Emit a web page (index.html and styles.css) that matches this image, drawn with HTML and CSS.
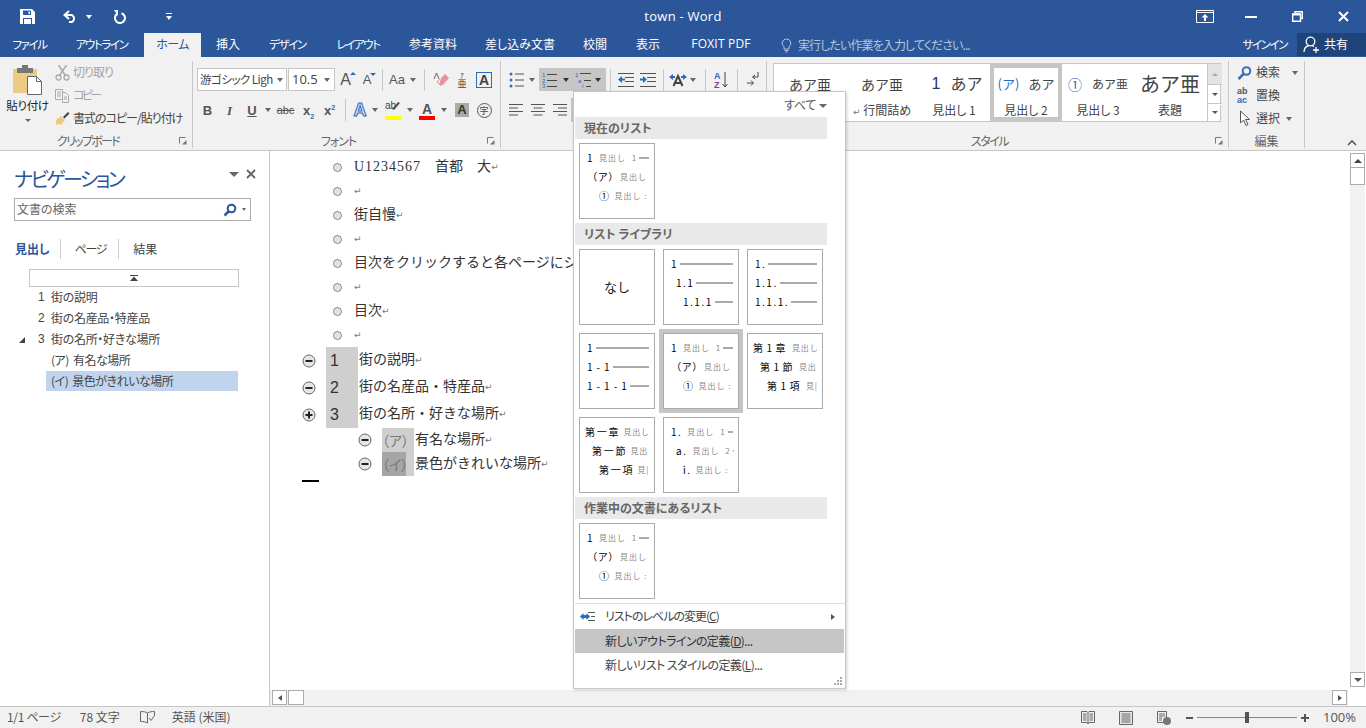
FILE: index.html
```html
<!DOCTYPE html>
<html lang="ja">
<head>
<meta charset="utf-8">
<title>town - Word</title>
<link rel="stylesheet" href="styles.css">
</head>
<body>
<svg class="sprite" width="0" height="0">
  <symbol id="launch" viewBox="0 0 8 8"><path d="M.5.5h6M.5.5v6" fill="none" stroke="#777"/><path d="M7.5 3v4.500h-4.500z" fill="#777"/></symbol>
  <symbol id="minus" viewBox="0 0 14 14"><circle cx="7" cy="7" r="6" fill="#e6e6e6" stroke="#666"/><path d="M3.500 7h7" stroke="#222" stroke-width="2"/></symbol>
  <symbol id="plus" viewBox="0 0 14 14"><circle cx="7" cy="7" r="6" fill="#e6e6e6" stroke="#666"/><path d="M3.500 7h7M7 3.500v7" stroke="#222" stroke-width="2"/></symbol>
</svg>

<header class="titlebar">
  <div class="qat">
    <svg class="q-save" width="15" height="15" viewBox="0 0 15 15"><path d="M0 0h12l3 3v12H0z" fill="#fff"/><path d="M3 1.500h8v4.500H3zM3 9h9v6H3z" fill="#2b579a"/><path d="M4 10h7v5H4z" fill="#fff"/><path d="M8.500 2.500h1.500v2.500H8.500z" fill="#fff"/></svg>
    <svg class="q-undo" width="15" height="13" viewBox="0 0 15 13"><path d="M6 1 1.500 5 6 9" fill="none" stroke="#fff" stroke-width="2"/><path d="M2 5h7a4 4 0 0 1 0 7H6" fill="none" stroke="#fff" stroke-width="2"/></svg>
    <i class="caret white q-caret"></i>
    <svg class="q-redo" width="14" height="14" viewBox="0 0 14 14"><path d="M8.500 3.200A5 5 0 1 1 4 3.900" fill="none" stroke="#fff" stroke-width="2"/><path d="M5 0v6L1 0z" fill="#fff"/></svg>
    <svg class="q-more" width="8" height="8" viewBox="0 0 8 8"><path d="M1 .5h6" stroke="#fff"/><path d="M1 3h6L4 7z" fill="#fff"/></svg>
  </div>
  <div class="doc-title">town - Word</div>
  <div class="winctl">
    <span><svg width="18" height="13" viewBox="0 0 18 13"><path d="M.5.500h17v12H.5zM.5 2.500h17" fill="none" stroke="#fff"/><path d="M9 4 5.500 7.500h2.500V11h2V7.500h2.500z" fill="#fff"/></svg></span>
    <span><svg width="12" height="2" viewBox="0 0 12 2"><path d="M0 1h12" stroke="#fff" stroke-width="2"/></svg></span>
    <span><svg width="11" height="11" viewBox="0 0 11 11"><path d="M3 2V.700h7.300V7.500H8.500" fill="none" stroke="#fff" stroke-width="1.400"/><path d="M.7 3h7.800v7.300H.7z" fill="none" stroke="#fff" stroke-width="1.400"/><path d="M.7 3.500h7.800" stroke="#fff" stroke-width="2"/></svg></span>
    <span><svg width="11" height="11" viewBox="0 0 11 11"><path d="M1 1l9 9M10 1l-9 9" stroke="#fff" stroke-width="2"/></svg></span>
  </div>
</header>

<nav class="tabbar">
  <div class="tabs">
    <span class="kana">ファイル</span><span class="kana">アウトライン</span><span class="active">ホーム</span><span>挿入</span><span class="kana">デザイン</span><span class="kana">レイアウト</span><span>参考資料</span><span>差し込み文書</span><span>校閲</span><span>表示</span><span class="latin">FOXIT PDF</span>
  </div>
  <div class="tellme">
    <svg width="11" height="15" viewBox="0 0 11 15"><path d="M5.500 1a4.300 4.300 0 0 0-2.500 7.800V11h5V8.800A4.300 4.300 0 0 0 5.500 1zM3.500 12.500h4M4.500 14h2" fill="none" stroke="#b4c5de"/></svg>
    <span>実行したい作業を入力してください...</span>
  </div>
  <span class="signin kana">サインイン</span>
  <div class="share">
    <svg width="17" height="17" viewBox="0 0 17 17"><circle cx="7.500" cy="5.500" r="4.300" fill="none" stroke="#fff" stroke-width="1.300"/><path d="M1 16c0-4 3-6 5-6.500M9 9.500c.8.200 1.500.6 2 1" fill="none" stroke="#fff" stroke-width="1.300"/><path d="M10 14h6M13 11v6" stroke="#fff" stroke-width="1.300"/></svg>
    <span>共有</span>
  </div>
</nav>

<section class="ribbon">
  <div class="group g-clip">
    <div class="body clip-body">
      <div class="paste">
        <svg width="30" height="30" viewBox="0 0 30 30"><path d="M0 4h24v24H0z" fill="#eecb84"/><path d="M4 3h16v5H4z" fill="#777"/><path d="M9 0h6v4H9z" fill="#777"/><path d="M14.500 11.500h9l5 5v13h-14z" fill="#fff" stroke="#666"/><path d="M23.500 11.500v5h5" fill="none" stroke="#666"/></svg>
        <span class="paste-label">貼り付け</span>
        <i class="caret small"></i>
      </div>
      <div class="stack">
        <div class="s-row disabled"><svg width="15" height="16" viewBox="0 0 15 16"><circle cx="3.500" cy="12.500" r="2.500" fill="none" stroke="#aaa" stroke-width="1.300"/><circle cx="11.500" cy="12.500" r="2.500" fill="none" stroke="#aaa" stroke-width="1.300"/><path d="M4.500 10.500 11.500 0M10.500 10.500 3.500 0" stroke="#aaa" stroke-width="1.500"/></svg><span class="t-cut">切り取り</span></div>
        <div class="s-row disabled"><svg width="15" height="14" viewBox="0 0 15 14"><path d="M.5.500h7v10h-7zM2 3h4M2 5h4M2 7h4" fill="none" stroke="#aaa"/><path d="M7.500 3.500h3l3 3v7h-6z" fill="#f1f1f1" stroke="#aaa"/><path d="M9 8h3M9 10h3" stroke="#aaa"/></svg><span class="t-copy">コピー</span></div>
        <div class="s-row"><svg width="15" height="15" viewBox="0 0 15 15"><path d="M1 9l5-4 4 4-4 5-3-1-2 1z" fill="#eecb84"/><path d="M8 6l5-5 1.500 1.500-5 5z" fill="#444"/></svg><span class="t-fmt">書式のコピー/貼り付け</span></div>
      </div>
    </div>
    <div class="glabel"><span></span><span class="t-clip">クリップボード</span><svg class="launcher"><use href="#launch"/></svg></div>
  </div>

  <div class="group g-font">
    <div class="body rows">
      <div class="grid font-r1">
        <div class="combo name"><span>游ゴシック Ligh</span><i class="caret"></i></div>
        <div class="combo size"><span>10.5</span><i class="caret"></i></div>
        <span class="gly big">A<i class="tri up"></i></span>
        <span class="gly mid">A<i class="tri down"></i></span>
        <i class="sep"></i>
        <span class="gly aa">Aa</span><i class="caret"></i>
        <i class="sep"></i>
        <svg width="16" height="15" viewBox="0 0 16 15"><path d="M8 6l4-4 4 4-6 7H6z" fill="#e7929d"/><path d="M8 14 4 10l3-3" fill="none" stroke="#e7929d"/><path d="M1 7 3.500 1 6 7" fill="none" stroke="#666"/></svg>
        <span class="phon"><small>ｱ</small><b>亜</b></span>
        <span class="boxa">A</span>
      </div>
      <div class="grid font-r2">
        <span class="gly bold">B</span>
        <span class="gly ital">I</span>
        <span class="gly under">U</span><i class="caret"></i>
        <span class="gly strike">abc</span>
        <span class="gly xs">x<sub>2</sub></span>
        <span class="gly xs">x<sup>2</sup></span>
        <i class="sep"></i>
        <span class="gly effect">A</span><i class="caret"></i>
        <span class="hl"><svg width="16" height="12" viewBox="0 0 16 12"><path d="M9 9l6-7-2-1-6 7z" fill="#555"/></svg><em>ab</em><b class="bar yellow"></b></span><i class="caret"></i>
        <span class="hl"><span class="gly fc">A</span><b class="bar red"></b></span><i class="caret"></i>
        <span class="shade">A</span>
        <span class="enc">字</span>
      </div>
    </div>
    <div class="glabel"><span></span><span class="t-font">フォント</span><svg class="launcher"><use href="#launch"/></svg></div>
  </div>

  <div class="group g-para">
    <div class="body rows">
      <div class="grid para-r1">
        <svg width="15" height="16" viewBox="0 0 15 16"><g fill="#3a6fb5"><circle cx="2" cy="2" r="1.500"/><circle cx="2" cy="8" r="1.500"/><circle cx="2" cy="14" r="1.500"/></g><path d="M6 2h9M6 8h9M6 14h9" stroke="#555"/></svg>
        <i class="caret"></i>
        <i></i>
        <div class="hot">
          <svg width="15" height="16" viewBox="0 0 15 16"><g fill="#2b6cb8" font-size="6" font-family="Liberation Sans"><text x="0" y="5">1</text><text x="0" y="11">2</text><text x="0" y="16">3</text></g><path d="M5 2.500h10M5 8.500h10M5 14.500h10" stroke="#444"/></svg>
          <i class="caret dark"></i>
          <svg width="17" height="16" viewBox="0 0 17 16"><g fill="#2b6cb8" font-size="6" font-family="Liberation Sans"><text x="0" y="5">1</text><text x="3" y="11">a</text></g><text x="7" y="16" fill="#2b6cb8" font-size="6" font-family="Liberation Sans">i</text><path d="M5 1.500h11M9 8.500h7M11 14.500h5" stroke="#444"/></svg>
          <i class="caret dark"></i>
        </div>
        <i class="sep"></i>
        <svg width="16" height="14" viewBox="0 0 16 14"><path d="M0 .5h16M7 4.500h9M7 8.500h9M0 13.500h16" stroke="#555"/><path d="M0 6.500 4 3v2.500h3v2H4V10z" fill="#2b6cb8"/></svg>
        <svg width="16" height="14" viewBox="0 0 16 14"><path d="M0 .5h16M7 4.500h9M7 8.500h9M0 13.500h16" stroke="#555"/><path d="M7 6.500 3 3v2.500H0v2h3V10z" fill="#2b6cb8"/></svg>
        <i class="sep"></i>
        <svg width="18" height="14" viewBox="0 0 18 14"><path d="M0 4l4-3v2h2v2H4v2zM18 4l-4-3v2h-2v2h2v2z" fill="#2b6cb8"/><path d="M4.500 13 9 3l4.500 10M6 10h6" fill="none" stroke="#444" stroke-width="2"/></svg>
        <i class="caret"></i>
        <i class="sep"></i>
        <svg width="14" height="18" viewBox="0 0 14 18"><text x="0" y="8" font-size="9" font-weight="700" fill="#2b6cb8" font-family="Liberation Sans">A</text><text x="0" y="17" font-size="9" font-weight="700" fill="#7b3fa0" font-family="Liberation Sans">Z</text><path d="M11 1v15M8.500 13l2.500 3 2.500-3" fill="none" stroke="#444"/></svg>
        <i class="sep"></i>
        <svg width="13" height="15" viewBox="0 0 13 15"><path d="M12 0v5H7M9 3 6.500 5 9 7" fill="none" stroke="#444"/><path d="M1 11h6M5 8.500 7.500 11 5 13.500" fill="none" stroke="#444"/></svg>
      </div>
      <div class="grid para-r2">
        <svg width="14" height="12" viewBox="0 0 14 12"><path d="M0 .5h14M0 4h9M0 7.500h14M0 11h9" stroke="#555"/></svg>
        <svg width="14" height="12" viewBox="0 0 14 12"><path d="M0 .5h14M2.500 4h9M0 7.500h14M2.500 11h9" stroke="#555"/></svg>
        <svg width="14" height="12" viewBox="0 0 14 12"><path d="M0 .5h14M5 4h9M0 7.500h14M5 11h9" stroke="#555"/></svg>
        <i class="pressed"></i>
      </div>
    </div>
    <div class="glabel"></div>
  </div>

  <div class="group g-style">
    <div class="gallery">
      <div class="style"><div class="pv p-sm"><span>あア亜</span></div></div>
      <div class="style"><div class="pv p-sm"><span>あア亜</span></div><div class="sl"><span class="ret">↵</span> 行間詰め</div></div>
      <div class="style"><div class="pv p-h1"><span class="navy">1</span><span>あア</span></div><div class="sl">見出し 1</div></div>
      <div class="style on"><div class="pv p-h2"><span class="blue">(ア)</span><span>あア</span></div><div class="sl">見出し 2</div></div>
      <div class="style"><div class="pv p-h3"><span class="blue circled">①</span><span>あア亜</span></div><div class="sl">見出し 3</div></div>
      <div class="style"><div class="pv p-t"><span>あア亜</span></div><div class="sl">表題</div></div>
      <div class="gscroll">
        <span class="dim"><i class="tri-s up"></i></span>
        <span><i class="tri-s"></i></span>
        <span class="more"><i class="tri-s"></i></span>
      </div>
    </div>
    <div class="glabel"><span></span><span class="t-style">スタイル</span><svg class="launcher"><use href="#launch"/></svg></div>
  </div>

  <div class="group g-edit">
    <div class="body stack edit-stack">
      <div class="s-row"><svg width="14" height="14" viewBox="0 0 14 14"><circle cx="9" cy="5" r="3.800" fill="none" stroke="#3a6fb5" stroke-width="2"/><path d="M6 8 1 13" stroke="#3a6fb5" stroke-width="2.500"/></svg><span>検索</span><i class="caret"></i></div>
      <div class="s-row"><span class="abac"><b>ab</b><b>ac</b></span><span>置換</span></div>
      <div class="s-row"><svg width="14" height="17" viewBox="0 0 14 17"><path d="M3 1v12l3-3 2.500 5.500 2-1L8 9.500h4z" fill="#fff" stroke="#555"/></svg><span>選択</span><i class="caret tight"></i></div>
    </div>
    <div class="glabel"><span></span><span>編集</span><span></span></div>
  </div>

  <svg class="collapse" width="10" height="6" viewBox="0 0 10 6"><path d="M1 5l4-4 4 4" fill="none" stroke="#555" stroke-width="1.600"/></svg>
</section>

<main class="workspace">
  <aside class="nav">
    <div class="nav-head">
      <h2>ナビゲーション</h2>
      <i class="caret wide"></i>
      <svg width="10" height="10" viewBox="0 0 10 10"><path d="M1 1l8 8M9 1 1 9" stroke="#666" stroke-width="1.800"/></svg>
    </div>
    <div class="nav-search">
      <span>文書の検索</span>
      <svg width="14" height="14" viewBox="0 0 14 14"><circle cx="8.500" cy="5.500" r="3.800" fill="none" stroke="#2b579a" stroke-width="2"/><path d="M6 8 1.500 12.500" stroke="#2b579a" stroke-width="2.500"/></svg>
      <i class="caret"></i>
    </div>
    <div class="nav-tabs"><b>見出し</b><span class="t-page">ページ</span><span>結果</span></div>
    <div class="nav-up"><svg width="8" height="6" viewBox="0 0 8 6"><path d="M0 .5h8" stroke="#444"/><path d="M4 1.500 8 6H0z" fill="#444"/></svg></div>
    <ul class="tree">
      <li><i class="exp"></i><span class="num">1</span>街の説明</li>
      <li><i class="exp"></i><span class="num">2</span>街の名産品・特産品</li>
      <li><i class="exp open"></i><span class="num">3</span>街の名所・好きな場所</li>
      <li class="sub">(ア) 有名な場所</li>
      <li class="sub cur">(イ) 景色がきれいな場所</li>
    </ul>
  </aside>

  <div class="editor">
    <div class="editor-main">
      <article class="doc">
        <p class="line"><i class="dot"></i><span class="mono">U1234567</span>　首都　大<span class="ret">↵</span></p>
        <p class="line"><i class="dot"></i><span class="ret">↵</span></p>
        <p class="line"><i class="dot"></i>街自慢<span class="ret">↵</span></p>
        <p class="line"><i class="dot"></i><span class="ret">↵</span></p>
        <p class="line"><i class="dot"></i>目次をクリックすると各ページにジャンプします<span class="ret">↵</span></p>
        <p class="line"><i class="dot"></i><span class="ret">↵</span></p>
        <p class="line"><i class="dot"></i>目次<span class="ret">↵</span></p>
        <p class="line"><i class="dot"></i><span class="ret">↵</span></p>
        <p class="h1"><svg class="tg"><use href="#minus"/></svg><span class="hn">1</span>街の説明<span class="ret">↵</span></p>
        <p class="h1"><svg class="tg"><use href="#minus"/></svg><span class="hn">2</span>街の名産品・特産品<span class="ret">↵</span></p>
        <p class="h1"><svg class="tg"><use href="#plus"/></svg><span class="hn">3</span>街の名所・好きな場所<span class="ret">↵</span></p>
        <p class="h2"><svg class="tg"><use href="#minus"/></svg><span class="hk">（ア）</span>有名な場所<span class="ret">↵</span></p>
        <p class="h2"><svg class="tg"><use href="#minus"/></svg><span class="hk sel"><span>（イ）</span></span>景色がきれいな場所<span class="ret">↵</span></p>
        <i class="eod"></i>
      </article>
      <div class="hscroll">
        <span class="sb-btn"><i class="tri-h left"></i></span>
        <span class="sb-thumb"></span>
        <span class="sb-fill"></span>
        <span class="sb-btn"><i class="tri-h"></i></span>
      </div>
    </div>
    <div class="vscroll">
      <span class="sb-btn"><i class="tri-s up"></i></span>
      <span class="sb-thumb"></span>
      <span class="sb-fill"></span>
      <span class="sb-btn"><i class="tri-s"></i></span>
    </div>
  </div>
</main>

<footer class="status">
  <span class="st-a">1/1 ページ</span>
  <span class="st-b">78 文字</span>
  <svg class="st-c" width="15" height="13" viewBox="0 0 15 13"><path d="M7.500 2C6 .8 3 .5.500.500v10c2.500 0 5.500.3 7 1.500M7.500 2V12M7.500 2c1.500-1.200 4.500-1.500 7-1.500V5" fill="none" stroke="#666"/><path d="M9 7l2 2.500 3.500-5" fill="none" stroke="#666"/></svg>
  <span class="st-d">英語 (米国)</span>
  <div class="st-right">
    <svg width="14" height="14" viewBox="0 0 14 14"><path d="M.5.500H6l1 1 1-1h5.500v11H8l-1 1.500-1-1.500H.5zM7 1.500v11M2 3h3.500M2 5h3.500M2 7h3.500M2 9h3.500M8.500 3H12M8.500 5H12M8.500 7H12M8.500 9H12" fill="none" stroke="#666"/></svg>
    <svg width="14" height="14" viewBox="0 0 14 14"><path d="M.5.500h13v13H.5z" fill="#e6e6e6" stroke="#666"/><path d="M2.500 3h9M2.500 5h9M2.500 7h9M2.500 9h9M2.500 11h9" stroke="#666"/></svg>
    <svg width="14" height="14" viewBox="0 0 14 14"><path d="M.5.500h9v11H.5zM2 3h6M2 5h6M2 7h3M2 9h3" fill="none" stroke="#666"/><circle cx="10" cy="10" r="4" fill="#777"/></svg>
    <div class="zoom">
      <svg width="7" height="2" viewBox="0 0 7 2"><path d="M0 1h7" stroke="#555" stroke-width="2"/></svg>
      <div class="track"><i></i></div>
      <svg width="8" height="8" viewBox="0 0 8 8"><path d="M0 4h8M4 0v8" stroke="#555" stroke-width="2"/></svg>
    </div>
    <span class="pct">100%</span>
  </div>
</footer>

<div class="menu">
  <div class="m-top"><span>すべて</span><i class="caret"></i></div>
  <div class="m-h">現在のリスト</div>
  <div class="thumbs">
    <div class="thumb">
      <div class="tr i1"><b>1</b><em>見出し 1</em><u></u></div>
      <div class="tr i2"><b class="k">（ア）</b><em>見出し</em></div>
      <div class="tr i3"><b>①</b><em>見出し :</em></div>
    </div>
  </div>
  <div class="m-h">リスト ライブラリ</div>
  <div class="thumbs wrap">
    <div class="thumb none">なし</div>
    <div class="thumb">
      <div class="tr i1"><b>1</b><u></u></div>
      <div class="tr i2"><b>1.1</b><u></u></div>
      <div class="tr i3"><b>1.1.1</b><u></u></div>
    </div>
    <div class="thumb">
      <div class="tr i1"><b>1.</b><u></u></div>
      <div class="tr i1"><b>1.1.</b><u></u></div>
      <div class="tr i1"><b>1.1.1.</b><u></u></div>
    </div>
    <div class="thumb">
      <div class="tr i1"><b>1</b><u></u></div>
      <div class="tr i1"><b class="dash">1 - 1</b><u></u></div>
      <div class="tr i1"><b class="dash">1 - 1 - 1</b><u></u></div>
    </div>
    <div class="thumb picked">
      <div class="tr i1"><b>1</b><em>見出し 1</em><u></u></div>
      <div class="tr i2"><b class="k">（ア）</b><em>見出し</em></div>
      <div class="tr i3"><b>①</b><em>見出し :</em></div>
    </div>
    <div class="thumb">
      <div class="tr j1"><b class="zn">第1章</b><em>見出し</em></div>
      <div class="tr j2"><b class="zn">第1節</b><em>見出</em></div>
      <div class="tr j3"><b class="zn">第1項</b><em>見|</em></div>
    </div>
    <div class="thumb">
      <div class="tr j1"><b class="zh">第一章</b><em>見出し</em></div>
      <div class="tr j2"><b class="zh">第一節</b><em>見出</em></div>
      <div class="tr j3"><b class="zh">第一項</b><em>見|</em></div>
    </div>
    <div class="thumb">
      <div class="tr i1"><b>1.</b><em>見出し 1</em><u></u></div>
      <div class="tr i2"><b>a.</b><em>見出し 2</em><u></u></div>
      <div class="tr i3"><b>i.</b><em>見出し :</em></div>
    </div>
  </div>
  <div class="m-h">作業中の文書にあるリスト</div>
  <div class="thumbs">
    <div class="thumb">
      <div class="tr i1"><b>1</b><em>見出し 1</em><u></u></div>
      <div class="tr i2"><b class="k">（ア）</b><em>見出し</em></div>
      <div class="tr i3"><b>①</b><em>見出し :</em></div>
    </div>
  </div>
  <div class="m-sep"></div>
  <div class="m-item first">
    <svg width="15" height="9" viewBox="0 0 15 9"><path d="M8 .5h7M11 4.500h4M8 8.500h7" stroke="#555"/><path d="M0 4.500 3.500 1v2h3V1L10 4.500 6.500 8V6h-3v2z" fill="#2b6cb8"/></svg>
    <span>リストのレベルの変更(<u>C</u>)</span>
    <i class="tri-h end"></i>
  </div>
  <div class="m-item hover"><span>新しいアウトラインの定義(<u>D</u>)...</span></div>
  <div class="m-item"><span>新しいリスト スタイルの定義(<u>L</u>)...</span></div>
  <svg class="grip" width="8" height="8" viewBox="0 0 8 8"><path d="M6 0h2v2H6zM3 3h2v2H3zM6 3h2v2H6zM0 6h2v2H0zM3 6h2v2H3zM6 6h2v2H6z" fill="#aaa"/></svg>
</div>
</body>
</html>
```

FILE: styles.css
```css
* { box-sizing: border-box; }
html, body { margin: 0; height: 100%; }
body {
  width: 1366px; height: 728px; overflow: hidden; position: relative;
  display: flex; flex-direction: column;
  font: 12px/1.2 "Noto Sans CJK JP", "Noto Sans", sans-serif;
  font-feature-settings: "palt";
  color: #444; background: #fff;
}
i, em, b { font-style: normal; }
svg { display: block; flex: none; }
.sprite { position: absolute; }

.caret { display: block; width: 0; height: 0; border: 3.5px solid transparent; border-top: 4px solid #666; border-bottom: 0; flex: none; }
.caret.white { border-top-color: #fff; }
.caret.dark { border-top-color: #333; }
.caret.small { border-width: 3px; border-top-width: 3px; border-bottom: 0; }

/* title */
.titlebar { height: 33px; background: #2b579a; display: grid; grid-template-columns: 1fr auto 1fr; align-items: center; color: #fff; flex: none; }
.qat { display: flex; align-items: center; padding-left: 20px; }
.q-undo { margin-left: 28px; }
.q-caret { margin-left: 8px; }
.q-redo { margin-left: 21px; }
.q-more { margin-left: 38px; }
.doc-title { font-size: 13px; letter-spacing: .25px; font-family: "Open Sans", sans-serif; }
.winctl { display: grid; grid-template-columns: repeat(4, 46px); justify-self: end; }
.winctl span { display: flex; align-items: center; justify-content: center; height: 30px; }

/* tabs */
.tabbar { height: 24px; background: #2b579a; display: flex; align-items: stretch; color: #fff; flex: none; }
.tabs { display: grid; grid-template-columns: 59px 85px 57px 54px 65px 76px 74px 100px 50px 56px 90px; }
.tabs span { display: flex; align-items: center; justify-content: center; padding-bottom: 1px; }
.tabs .active { background: #f1f1f1; color: #2b579a; letter-spacing: -.6px; }
.tabs .latin { font-family: "Open Sans", sans-serif; letter-spacing: .2px; }
.kana { font-size: 11.5px; letter-spacing: -1.4px; }
.tellme { display: flex; align-items: center; gap: 6px; margin-left: 15px; color: #b4c5de; letter-spacing: -.9px; }
.signin { margin-left: auto; align-self: center; padding-right: 10px; }
.share { width: 69px; height: 23px; background: #1f4479; display: flex; align-items: center; gap: 4px; padding-left: 6px; }

/* ribbon */
.ribbon { height: 94px; background: #f1f1f1; border-bottom: 1px solid #c6c6c6; display: flex; flex: none; position: relative; }
.group { display: flex; flex-direction: column; position: relative; margin: 4px 0 2px; border-right: 1px solid #c6c6c6; flex: none; }
.body { height: 72px; }
.g-clip { width: 193px; }
.g-font { width: 308px; }
.g-para { width: 266px; }
.g-style { width: 462px; }
.g-edit { width: 76px; }
.glabel { height: 14px; margin-top: auto; display: grid; grid-template-columns: minmax(0, 1fr) auto minmax(0, 1fr); align-items: center; color: #666; text-align: center; line-height: 14px; }
.g-clip .glabel span:nth-child(2), .g-font .glabel span:nth-child(2), .g-style .glabel span:nth-child(2) { margin-right: 16px; }
.launcher { width: 8px; height: 8px; justify-self: end; margin-right: 5px; }
.t-clip { letter-spacing: -1.7px; }
.t-font { letter-spacing: -1px; }
.t-style { letter-spacing: -1.5px; }

.clip-body { display: flex; }
.paste { width: 55px; display: flex; flex-direction: column; align-items: center; padding-top: 4px; }
.paste-label { margin-top: 4px; color: #222; font-size: 11.5px; letter-spacing: -.3px; white-space: nowrap; }
.paste .caret { margin-top: 6px; }
.stack { display: flex; flex-direction: column; }
.s-row { height: 23px; display: flex; align-items: center; gap: 3px; white-space: nowrap; }
.s-row svg { width: 15px; }
.disabled { color: #a3a3a3; }
.t-cut { letter-spacing: -1px; }
.t-copy { letter-spacing: -2.6px; }
.t-fmt { letter-spacing: -1px; }

.rows { display: flex; flex-direction: column; gap: 7px; padding: 7px 0 0 4px; }
.grid { display: grid; align-items: center; justify-items: center; height: 23px; }
.font-r1 { grid-template-columns: 91px 47px 21px 22px 8px 22px 9px 14px 20px 22px 22px; }
.font-r2 { grid-template-columns: 21px 23px 22px 10px 25px 21px 21px 10px 20px 10px 26px 8px 26px 8px 28px 16px; height: 24px; }
.para-r1 { grid-template-columns: 22px 10px 2px 67px 8px 23px 22px 8px 22px 8px 16px 16px 16px 15px; }
.para-r2 { grid-template-columns: 22px 22px 22px 22px; height: 24px; }
.sep { width: 1px; height: 22px; background: #c6c6c6; display: block; }
.combo { height: 23px; background: #fff; border: 1px solid #c6c6c6; display: flex; align-items: center; justify-content: space-between; padding: 0 3px 0 2px; justify-self: start; color: #444; white-space: nowrap; }
.combo.name { width: 90px; font-size: 11.5px; letter-spacing: -.5px; }
.combo.size { width: 47px; font-family: "Open Sans", sans-serif; font-size: 13px; padding-left: 3px; padding-right: 4px; }
.gly { font-family: "Liberation Sans", sans-serif; color: #555; position: relative; display: block; line-height: 1; }
.gly.big { font-size: 16px; }
.gly.mid { font-size: 13px; }
.gly.aa { font-size: 13px; }
.tri { position: absolute; right: -5px; top: 0; border: 3px solid transparent; }
.tri.up { border-top: 0; border-bottom: 3px solid #2b6cb8; }
.tri.down { border-bottom: 0; border-top: 3px solid #2b6cb8; }
.phon { display: flex; flex-direction: column; align-items: center; color: #444; font-size: 9px; line-height: 9px; }
.phon small { font-size: 7px; line-height: 8px; }
.phon b { font-weight: 400; }
.boxa { width: 16px; height: 16px; border: 1px solid #2b6cb8; font: 700 14px/14px "Liberation Sans", sans-serif; text-align: center; color: #444; }
.bold { font-weight: 700; font-size: 13px; }
.ital { font-weight: 700; font-style: italic; font-size: 13px; font-family: "Liberation Serif", serif; }
.under { font-weight: 700; font-size: 13px; text-decoration: underline; }
.strike { font-size: 11px; text-decoration: line-through; }
.xs { font-weight: 700; font-size: 13px; }
.xs sub, .xs sup { font-size: 7px; color: #2b6cb8; line-height: 0; }
.effect { font-size: 18px; font-weight: 700; color: #dbe6f5; -webkit-text-stroke: 1px #2b6cb8; }
.hl { display: flex; flex-direction: column; align-items: center; position: relative; height: 19px; justify-content: flex-end; }
.hl em { position: absolute; left: 0; top: 0; font: 10px/10px "Liberation Sans", sans-serif; color: #444; }
.hl svg { position: absolute; left: 0; top: 0; }
.bar { display: block; width: 16px; height: 4px; }
.yellow { background: #ffff00; }
.red { background: #ff0000; }
.fc { font-size: 14px; line-height: 14px; font-weight: 700; color: #555; }
.shade { width: 14px; height: 14px; background: #aaa; color: #333; font: 700 13px/14px "Liberation Sans", sans-serif; text-align: center; }
.enc { width: 15px; height: 15px; border: 1px solid #555; border-radius: 50%; font-size: 9px; line-height: 13px; text-align: center; }

.hot { width: 67px; height: 23px; background: #c6c6c6; display: grid; grid-template-columns: 21px 12px 22px 8px; align-items: center; justify-items: center; }
.pressed { width: 22px; height: 24px; background: #c6c6c6; display: block; }

.gallery { margin: 2px 0 0 6px; width: 448px; height: 59px; background: #fff; border: 1px solid #c6c6c6; display: grid; grid-template-columns: 72px 72px 72px 72px 72px 72px 1fr; }
.style { display: flex; flex-direction: column; align-items: center; height: 57px; overflow: hidden; color: #444; position: relative; }
.style.on { outline: 4px solid #c6c6c6; outline-offset: -4px; }
.pv { height: 40px; display: flex; align-items: center; justify-content: center; gap: 9px; white-space: nowrap; color: #444; font-feature-settings: normal; }
.sl { line-height: 14px; margin-top: -1px; }
.p-sm { font-size: 14px; }
.p-h1 { font-size: 16px; gap: 10px; padding-left: 6px; }
.p-h2 { font-size: 13px; gap: 9px; }
.p-h3 { font-size: 12px; gap: 10px; }
.p-t { font-size: 20px; }
.navy { color: #1f3864; font-family: "Liberation Sans", sans-serif; }
.blue { color: #2b6cb8; }
.circled { font-size: 14px; }
.ret { color: #777; font: 9px/1 "DejaVu Sans", sans-serif; }
.gscroll { display: grid; grid-template-rows: 21px 19px 17px; width: 15px; border-left: 1px solid #c6c6c6; margin-left: 1px; }
.gscroll span { display: flex; align-items: center; justify-content: center; border-bottom: 1px solid #c6c6c6; }
.gscroll .dim { background: #e3e3e3; }
.gscroll .more { border-bottom: 0; box-shadow: inset 0 5px 0 -4px #fff; }
.tri-s { display: block; width: 0; height: 0; border: 3px solid transparent; border-top: 3px solid #555; border-bottom: 0; }
.tri-s.up { border-top: 0; border-bottom: 3px solid #555; }
.dim .tri-s.up { border-bottom-color: #aaa; }
.edit-stack { padding: 0 0 0 8px; }
.edit-stack .s-row { gap: 4px; }
.edit-stack .caret { margin-left: 8px; }
.edit-stack .caret.tight { margin-left: 2px; }
.abac { width: 15px; display: flex; flex-direction: column; font: 700 9px/9px "Liberation Sans", sans-serif; color: #555; }
.abac b:last-child { color: #2b6cb8; }
.collapse { position: absolute; left: 1347px; top: 83px; }

/* workspace */
.workspace { flex: 1; display: flex; min-height: 0; }
.nav { width: 270px; border-right: 1px solid #c6c6c6; flex: none; }
.nav-head { display: flex; align-items: flex-start; padding: 14px 13px 0 14px; height: 42px; }
.nav-head h2 { margin: 0; flex: 1; font-weight: 400; font-size: 20px; line-height: 28px; color: #2b579a; white-space: nowrap; letter-spacing: -2.6px; }
.nav-head .wide { border-width: 5px; border-top-width: 5px; border-bottom: 0; margin-top: 7px; margin-right: 7px; }
.nav-head svg { margin-top: 4px; }
.nav-search { margin: 5px 0 0 14px; width: 237px; height: 23px; border: 1px solid #ababab; display: flex; align-items: center; padding: 0 4px 0 2px; color: #666; }
.nav-search span { flex: 1; }
.nav-search .caret { margin-left: 5px; border-width: 2.5px; border-top-width: 3px; border-bottom: 0; }
.nav-tabs { display: flex; margin: 16px 0 0 15px; height: 24px; align-items: center; }
.nav-tabs b { color: #2b579a; font-weight: 700; padding-right: 10px; border-right: 1px solid #d0d0d0; line-height: 20px; }
.nav-tabs span { padding: 0 12px 0 14px; border-right: 1px solid #d0d0d0; line-height: 20px; }
.nav-tabs span:last-child { border-right: 0; }
.t-page { letter-spacing: -1.3px; }
.nav-up { margin: 8px 0 0 29px; width: 210px; height: 18px; border: 1px solid #c6c6c6; display: flex; align-items: center; justify-content: center; }
.tree { list-style: none; margin: 0; padding: 0; }
.tree li { height: 21px; display: flex; align-items: center; white-space: pre; letter-spacing: -.3px; }
.exp { width: 38px; display: block; flex: none; height: 6px; position: relative; }
.exp.open::before { content: ""; position: absolute; left: 19px; top: 0; border-left: 6px solid transparent; border-bottom: 6px solid #444; }
.num { width: 13px; flex: none; font-family: "Liberation Sans", sans-serif; }
.tree .sub { margin-left: 46px; width: 192px; padding-left: 5px; word-spacing: 2px; letter-spacing: -.5px; }
.tree .cur { background: #c0d4ee; height: 20px; }

.editor { flex: 1; display: flex; min-width: 0; }
.editor-main { flex: 1; display: flex; flex-direction: column; min-width: 0; }
.doc { flex: 1; padding-top: 4px; overflow: hidden; font: 14px/1.2 "Liberation Serif", "Noto Sans CJK JP", serif; font-feature-settings: normal; color: #333; min-width: 0; min-height: 0; }
.doc p { margin: 0; display: flex; align-items: center; white-space: nowrap; }
.line { height: 24px; padding-left: 63px; }
.dot { width: 9px; height: 9px; border-radius: 50%; background: #e2e2e2; border: 1px solid #8a8a8a; margin-right: 12px; flex: none; }
.mono { letter-spacing: 1px; }
.h1 { height: 27px; padding-left: 32px; }
.h2 { height: 24px; padding-left: 88px; }
.tg { width: 14px; height: 14px; }
.hn { width: 32px; height: 100%; margin: 0 1px 0 10px; background: #cfcfcf; padding-left: 4px; font: 16px/27px "Liberation Sans", sans-serif; color: #333; flex: none; }
.hk { width: 32px; height: 100%; margin: 0 1px 0 10px; background: #cfcfcf; color: #777; font-family: "Noto Sans CJK JP", sans-serif; font-feature-settings: "palt"; line-height: 24px; flex: none; white-space: nowrap; }
.hk.sel span { display: block; width: 24px; height: 100%; background: #a5a5a5; }
.eod { display: block; width: 17px; height: 2px; background: #000; margin: 4px 0 0 32px; }

.vscroll { width: 18px; flex: none; display: flex; flex-direction: column; padding: 2px 1px 19px 2px; }
.vscroll .sb-btn { height: 15px; }
.vscroll .sb-thumb { height: 18px; margin-top: -1px; }
.vscroll .sb-fill { background: #f1f1f1; }
.vscroll .tri-s { border-width: 4px; border-top-width: 4px; border-bottom: 0; }
.vscroll .tri-s.up { border-top: 0; border-bottom-width: 4px; border-bottom-style: solid; }
.sb-btn { display: flex; align-items: center; justify-content: center; border: 1px solid #ababab; background: #fff; flex: none; }
.sb-thumb { border: 1px solid #ababab; background: #fff; display: block; flex: none; }
.sb-fill { flex: 1; }
.hscroll { height: 16px; background: #f1f1f1; display: flex; padding: 0 1px 1px 2px; flex: none; }
.hscroll .sb-btn { width: 15px; }
.hscroll .sb-thumb { width: 16px; margin-left: 1px; }
.tri-h { display: block; width: 0; height: 0; border: 3.500px solid transparent; border-left: 4px solid #555; border-right: 0; }
.tri-h.left { border-left: 0; border-right: 4px solid #555; }
.tri-h.end { margin-left: auto; margin-right: 9px; }

/* status */
.status { height: 22px; background: #f1f1f1; border-top: 1px solid #c6c6c6; display: flex; align-items: center; flex: none; color: #555; }
.st-a { margin-left: 7px; letter-spacing: -.35px; }
.st-b { margin-left: 19px; }
.st-c { margin-left: 20px; }
.st-d { margin-left: 17px; }
.st-right { margin-left: auto; display: flex; align-items: center; }
.st-right > svg { margin-right: 24px; }
.st-right > svg:nth-child(3) { margin-right: 15px; }
.zoom { display: flex; align-items: center; gap: 4px; }
.track { width: 100px; height: 1px; background: #888; position: relative; }
.track i { position: absolute; left: 48px; top: -5px; width: 4px; height: 11px; background: #555; }
.pct { margin: 0 10px 0 14px; font-family: "Open Sans", sans-serif; font-size: 13px; }

/* menu */
.menu { position: absolute; left: 573px; top: 91px; width: 273px; height: 598px; background: #fff; border: 1px solid #c6c6c6; box-shadow: 1px 1px 3px rgba(0,0,0,.18); padding: 0 1px; }
.m-top { height: 25px; width: 252px; display: flex; align-items: center; justify-content: flex-end; gap: 3px; padding-top: 2px; color: #555; }
.m-top .caret { border-width: 4px; border-top-width: 4px; border-bottom: 0; }
.m-top span { letter-spacing: -.3px; }
.m-h { width: 252px; height: 22px; background: #e9e9e9; padding-left: 9px; display: flex; align-items: center; font-weight: 700; color: #666; }
.thumbs { padding: 4px 0 4px 4px; display: grid; grid-template-columns: repeat(3, 76px); gap: 8px; }
.thumb { width: 76px; height: 76px; border: 1px solid #aaa; padding: 4px 3px 0 0; overflow: hidden; background: #fff; }
.thumb.picked { outline: 4px solid #c6c6c6; }
.thumb.none { display: flex; align-items: center; justify-content: center; padding: 0; font-size: 13px; color: #222; font-feature-settings: normal; }
.tr { height: 19px; display: flex; align-items: center; white-space: nowrap; overflow: hidden; font: 10px/1 "Noto Sans CJK JP", sans-serif; }
.tr b { font-weight: 400; color: #000; letter-spacing: 1.5px; flex: none; font-feature-settings: normal; }
.tr b.k { font-feature-settings: "palt"; letter-spacing: 1.2px; }
.tr b.dash { letter-spacing: .9px; }
.tr b.zh { letter-spacing: 1.8px; }
.tr b.zn { letter-spacing: 3.5px; }
.tr em { color: #888; font-size: 8px; letter-spacing: 1px; word-spacing: 3px; margin-left: 5px; flex: none; font-feature-settings: normal; }
.tr b.zh + em, .tr b.zn + em { margin-left: 3px; letter-spacing: .8px; }
.tr u { flex: 1; min-width: 0; height: 2px; background: #aaa; margin: 0 2px 0 2px; display: block; text-decoration: none; }
.i1 { padding-left: 7px; }
.i2 { padding-left: 12px; }
.i3 { padding-left: 19px; }
.i3 em { word-spacing: 0; margin-left: 4px; }
.j1 { padding-left: 5px; }
.j2 { padding-left: 12px; }
.j3 { padding-left: 19px; }
.m-sep { height: 1px; background: #dedede; width: 270px; }
.m-item { height: 24px; width: 269px; display: flex; align-items: center; padding-left: 30px; color: #444; letter-spacing: -.6px; }
.m-item.first { height: 25px; padding-left: 5px; letter-spacing: -1px; }
.m-item.first span { margin-left: 10px; }
.m-item.hover { background: #c6c6c6; color: #333; }
.grip { position: absolute; right: 3px; bottom: 3px; }
```
